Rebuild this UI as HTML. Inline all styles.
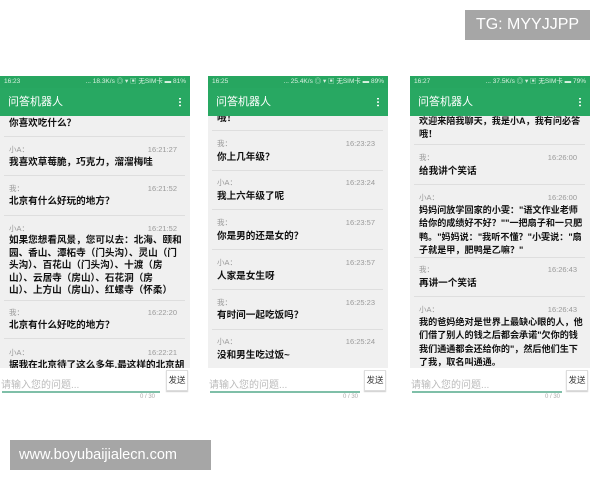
<!DOCTYPE html>
<html><head><meta charset="utf-8"><style>
*{margin:0;padding:0;box-sizing:border-box}
body{width:600px;height:480px;background:#fff;position:relative;overflow:hidden;font-family:"Liberation Sans","Noto Sans CJK SC",sans-serif}
.ph{position:absolute;top:76px;height:330px}
.sb{position:absolute;left:0;right:0;top:0;height:12px;background:#27a660;color:#d8f0e0;font-size:6.5px;line-height:12px;padding:0 4px}
.sb span{float:right}
.tb{position:absolute;left:0;right:0;top:12px;height:28px;background:#28a862;color:#fff;font-size:11px;line-height:28px;padding-left:8px}
.tb i{position:absolute;right:9px;top:9px;width:2px;height:10px;background:radial-gradient(circle,#fff 45%,transparent 50%) 0 0/2px 3.4px repeat-y}
.ct{position:absolute;left:0;right:0;top:40px;height:252px;background:#f0f0f0;overflow:hidden}
.t{position:absolute;left:9px;font-size:9.6px;line-height:13.3px;color:#111;font-weight:bold;white-space:nowrap}
.n{font-size:9.1px}
.l{position:absolute;left:9px;font-size:7.5px;line-height:10px;color:#999}
.m{position:absolute;right:13px;font-size:7.5px;line-height:10px;color:#999}
.s{position:absolute;left:4px;right:5px;height:1px;background:#dedede}
.in{position:absolute;left:0;right:0;top:292px;height:38px;background:#fff}
.ph1{position:absolute;left:1px;top:8px;font-size:10px;color:#bbb}
.ul{position:absolute;left:2px;width:158px;top:23px;height:2px;background:#7fbfa8}
.btn{position:absolute;right:2px;top:2px;width:22px;height:21px;border:1px solid #ddd;font-size:8.5px;line-height:19px;text-align:center;color:#333;box-shadow:0 1px 1px #ccc}
.cn{position:absolute;left:140px;top:26px;font-size:6px;color:#aaa}
</style></head><body>
<div style="position:absolute;left:465px;top:10px;width:125px;height:30px;background:#a6a6a6;color:#fff;font-size:16px;line-height:30px;text-align:center">TG: MYYJJPP</div>
<div style="position:absolute;left:10px;top:440px;width:201px;height:30px;background:#a6a6a6;color:#fff;font-size:14.5px;line-height:30px;padding-left:9px;white-space:nowrap;overflow:hidden">www.boyubaijialecn.com</div>

<!-- phone 1 -->
<div class="ph" style="left:0;width:190px">
<div class="sb">16:23<span>... 18.3K/s ◎ ▾ ▣ 无SIM卡 ▬ 81%</span></div>
<div class="tb">问答机器人<i></i></div>
<div class="ct">
<div class="t" style="top:1px">你喜欢吃什么？</div>
<div class="s" style="top:20px"></div>
<div class="l" style="top:29px">小A：</div><div class="m" style="top:29px">16:21:27</div>
<div class="t" style="top:40px">我喜欢草莓脆，巧克力，溜溜梅哇</div>
<div class="s" style="top:59px"></div>
<div class="l" style="top:68px">我：</div><div class="m" style="top:68px">16:21:52</div>
<div class="t" style="top:79px">北京有什么好玩的地方？</div>
<div class="s" style="top:99px"></div>
<div class="l" style="top:108px">小A：</div><div class="m" style="top:108px">16:21:52</div>
<div class="t" style="top:119px;line-height:12.5px">如果您想看风景，您可以去：北海、颐和<br>园、香山、潭柘寺（门头沟）、灵山（门<br>头沟）、百花山（门头沟）、十渡（房<br>山）、云居寺（房山）、石花洞（房<br>山）、上方山（房山）、红螺寺（怀柔）</div>
<div class="s" style="top:184px"></div>
<div class="l" style="top:192px">我：</div><div class="m" style="top:192px">16:22:20</div>
<div class="t" style="top:203px">北京有什么好吃的地方？</div>
<div class="s" style="top:222px"></div>
<div class="l" style="top:232px">小A：</div><div class="m" style="top:232px">16:22:21</div>
<div class="t" style="top:243px">据我在北京待了这么多年,最这样的北京胡</div>
</div>
<div class="in"><div class="ph1">请输入您的问题...</div><div class="ul"></div><div class="btn">发送</div><div class="cn">0 / 30</div></div>
</div>

<!-- phone 2 -->
<div class="ph" style="left:208px;width:180px">
<div class="sb">16:25<span>... 25.4K/s ◎ ▾ ▣ 无SIM卡 ▬ 89%</span></div>
<div class="tb">问答机器人<i></i></div>
<div class="ct">
<div class="t" style="top:-4px">哦！</div>
<div class="s" style="top:14px"></div>
<div class="l" style="top:23px">我：</div><div class="m" style="top:23px">16:23:23</div>
<div class="t" style="top:35px">你上几年级？</div>
<div class="s" style="top:54px"></div>
<div class="l" style="top:62px">小A：</div><div class="m" style="top:62px">16:23:24</div>
<div class="t" style="top:74px">我上六年级了呢</div>
<div class="s" style="top:93px"></div>
<div class="l" style="top:102px">我：</div><div class="m" style="top:102px">16:23:57</div>
<div class="t" style="top:114px">你是男的还是女的？</div>
<div class="s" style="top:133px"></div>
<div class="l" style="top:142px">小A：</div><div class="m" style="top:142px">16:23:57</div>
<div class="t" style="top:154px">人家是女生呀</div>
<div class="s" style="top:173px"></div>
<div class="l" style="top:182px">我：</div><div class="m" style="top:182px">16:25:23</div>
<div class="t" style="top:193px">有时间一起吃饭吗？</div>
<div class="s" style="top:213px"></div>
<div class="l" style="top:221px">小A：</div><div class="m" style="top:221px">16:25:24</div>
<div class="t" style="top:233px">没和男生吃过饭~</div>
</div>
<div class="in"><div class="ph1">请输入您的问题...</div><div class="ul" style="width:150px"></div><div class="btn">发送</div><div class="cn" style="left:135px">0 / 30</div></div>
</div>

<!-- phone 3 -->
<div class="ph" style="left:410px;width:180px">
<div class="sb">16:27<span>... 37.5K/s ◎ ▾ ▣ 无SIM卡 ▬ 79%</span></div>
<div class="tb">问答机器人<i></i></div>
<div class="ct">
<div class="t n" style="top:-1px">欢迎来陪我聊天，我是小A，我有问必答<br>哦！</div>
<div class="s" style="top:28px"></div>
<div class="l" style="top:37px">我：</div><div class="m" style="top:37px">16:26:00</div>
<div class="t" style="top:49px">给我讲个笑话</div>
<div class="s" style="top:68px"></div>
<div class="l" style="top:77px">小A：</div><div class="m" style="top:77px">16:26:00</div>
<div class="t n" style="top:88px">妈妈问放学回家的小雯："语文作业老师<br>给你的成绩好不好？""一把扇子和一只肥<br>鸭。"妈妈说："我听不懂？"小雯说："扇<br>子就是甲，肥鸭是乙嘛？"</div>
<div class="s" style="top:141px"></div>
<div class="l" style="top:149px">我：</div><div class="m" style="top:149px">16:26:43</div>
<div class="t" style="top:161px">再讲一个笑话</div>
<div class="s" style="top:180px"></div>
<div class="l" style="top:189px">小A：</div><div class="m" style="top:189px">16:26:43</div>
<div class="t n" style="top:200px">我的爸妈绝对是世界上最缺心眼的人，他<br>们借了别人的钱之后都会承诺"欠你的钱<br>我们通通都会还给你的"，然后他们生下<br>了我，取名叫通通。</div>
</div>
<div class="in"><div class="ph1">请输入您的问题...</div><div class="ul" style="width:150px"></div><div class="btn">发送</div><div class="cn" style="left:135px">0 / 30</div></div>
</div>
</body></html>
